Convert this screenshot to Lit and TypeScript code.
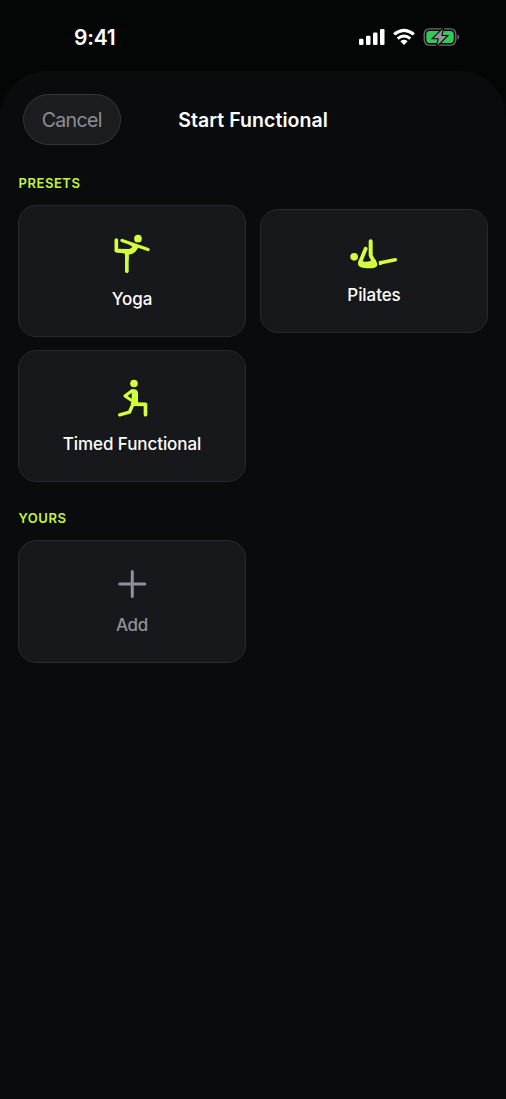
import { LitElement, html, css } from "lit";
import { customElement } from "lit/decorators.js";

const yoga = html`<svg width="60" height="54" viewBox="0 0 180 162">
  <circle cx="108" cy="38" r="11.500" fill="currentColor" />
  <g fill="none" stroke="currentColor" stroke-linecap="round" stroke-linejoin="round">
    <path d="M43 42V74L72 77" stroke-width="11" />
    <path d="M74.500 78V136" stroke-width="11" />
    <path d="M60 43.500L138 70.500" stroke-width="10" />
  </g>
  <path fill="currentColor" d="M43 68.500L80 69Q88 68 91 62Q87 58 81 57L84 50L112 60Q106 70 100 77Q93 84 80 86L80 102H71L68 82L43 79Z" />
</svg>`;

const pilates = html`<svg width="64" height="46" viewBox="0 0 192 138">
  <circle cx="36.500" cy="80.500" r="11.500" fill="currentColor" />
  <g fill="none" stroke="currentColor" stroke-linecap="round" stroke-linejoin="round">
    <path d="M71 56L55 95" stroke-width="11.500" />
    <path d="M86 34V76L97 98" stroke-width="12" />
    <path d="M116 98.500L160 89.500" stroke-width="10.500" />
  </g>
  <path fill="currentColor" d="M50 92Q46 102 50 107Q55 114 76 114.500Q96 115 103 110Q109 105 105 99L100 88L86 92Q78 96 66 95L58 89Z" />
  <path fill="currentColor" d="M110 94L120 92V103.500L111 105.500Z" />
</svg>`;

const lunge = html`<svg class="lunge" width="54" height="54" viewBox="0 0 162 162">
  <circle cx="84" cy="37.500" r="11.500" fill="currentColor" />
  <g fill="none" stroke="currentColor" stroke-linecap="round" stroke-linejoin="round">
    <path d="M78 59L57 75L75 87" stroke-width="9.500" />
    <path d="M82 97L70.500 123.500L41 131.500" stroke-width="10.500" />
    <path d="M84 99.500L118.500 100V131.500" stroke-width="11" />
  </g>
  <path fill="currentColor" d="M76 54.500H84Q96 55 96 67V94.500L98 105H84L75 102Q73 96 77 90V64Z" />
</svg>`;

const plus = html`<svg width="60" height="54" viewBox="0 0 60 54">
  <path d="M30.300 14.500V39.500M17.800 27H42.800" fill="none" stroke="currentColor" stroke-width="3" stroke-linecap="round" />
</svg>`;

@customElement("status-bar")
class StatusBar extends LitElement {
  static styles = css`
    :host { display: flex; height: 71px; box-sizing: border-box; padding: 25px 46px 0 74px; justify-content: space-between; color: #fff; }
    .time { font-size: 21px; line-height: 26px; font-weight: 600; letter-spacing: -0.2px; }
    svg { display: block; margin-top: 2px; }
  `;
  render() {
    return html`
      <span class="time">9:41</span>
      <svg width="102" height="20" viewBox="358 27 102 20">
        <g fill="#fff">
          <rect x="359" y="38.700" width="4.500" height="6.300" rx="1.300" />
          <rect x="366" y="35.800" width="4.500" height="9.200" rx="1.300" />
          <rect x="373" y="32.500" width="4.500" height="12.500" rx="1.300" />
          <rect x="380" y="29" width="4.500" height="16" rx="1.300" />
        </g>
        <g fill="none" stroke="#fff" stroke-width="3.100">
          <path d="M394.100 34.400Q404 26.200 413.900 34.400" />
          <path d="M397.700 38.600Q404 33.400 410.300 38.600" />
        </g>
        <path fill="#fff" d="M400.400 41.300Q404 38.400 407.600 41.300L404 45Z" />
        <rect x="424.200" y="28.800" width="31.600" height="16.400" rx="5.200" fill="none" stroke="#707372" stroke-width="1.300" />
        <path d="M457.500 34.500Q459.200 35 459.200 37T457.500 39.500Z" fill="#707372" />
        <rect x="426.300" y="31" width="27.400" height="12" rx="3.300" fill="#34c759" />
        <path d="M442.900 29L433.500 38.200H438.900L437.200 45.500L446.600 36H441.200Z" fill="#929594" stroke="#040606" stroke-width="2.200" paint-order="stroke" />
      </svg>
    `;
  }
}

@customElement("preset-card")
class PresetCard extends LitElement {
  static properties = { label: {}, icon: { attribute: false } };
  declare label: string;
  declare icon: unknown;
  static styles = css`
    :host { display: flex; flex-direction: column; align-items: center; box-sizing: border-box; height: 132px;
      padding-top: 20px; border: 1px solid #292a31; border-radius: 18px; background: #17181b; color: #d3ff3e; }
    :host(.short) { height: 124px; }
    :host(.add) { color: #8d929d; height: 123px; padding-top: 16px; }
    svg { display: block; }
    .lunge { margin-left: 2px; }
    .label { color: #fff; font-size: 17px; line-height: 22px; font-weight: 500; letter-spacing: -0.08px; margin-top: 8px; }
    :host(.add) .label { color: #8d929d; margin-top: 3px; letter-spacing: -0.3px; }
  `;
  render() {
    return html`${this.icon}<span class="label">${this.label}</span>`;
  }
}

@customElement("app-root")
class AppRoot extends LitElement {
  static styles = css`
    :host { display: block; height: 1099px; background: #040605; font-family: Inter, "Liberation Sans", sans-serif; overflow: hidden; }
    .sheet { height: 1028px; box-sizing: border-box; padding: 23px 18px 0; border-radius: 46px 46px 0 0; background: #090b0c; }
    .nav { display: grid; grid-template-columns: 1fr auto 1fr; align-items: center; height: 51px; }
    .cancel { justify-self: start; margin-left: 5px; width: 97.5px; height: 51px; box-sizing: border-box; border: 1px solid #343638;
      border-radius: 26px; background: #1c1d1f; color: #8b8d97; font: 400 19.500px Inter, sans-serif; letter-spacing: -0.65px; padding: 0; }
    .title { margin: 0; color: #fff; font-size: 19.500px; line-height: 26px; font-weight: 600; letter-spacing: 0.05px; }
    .section { margin: 0; padding-left: 0.5px; color: #c5f53a; font-size: 13px; line-height: 16px; font-weight: 600; letter-spacing: .55px; }
    .presets { margin-top: 30px; }
    .yours { margin-top: 28px; }
    .grid { display: grid; grid-template-columns: 1fr 1fr; gap: 13px 14px; align-items: center; margin-top: 14px; }
  `;
  render() {
    return html`
      <status-bar></status-bar>
      <main class="sheet">
        <header class="nav">
          <button class="cancel">Cancel</button>
          <h1 class="title">Start Functional</h1>
        </header>
        <h2 class="section presets">PRESETS</h2>
        <div class="grid">
          <preset-card label="Yoga" .icon=${yoga}></preset-card>
          <preset-card class="short" label="Pilates" .icon=${pilates}></preset-card>
          <preset-card label="Timed Functional" .icon=${lunge}></preset-card>
        </div>
        <h2 class="section yours">YOURS</h2>
        <div class="grid">
          <preset-card class="add" label="Add" .icon=${plus}></preset-card>
        </div>
      </main>
    `;
  }
}
